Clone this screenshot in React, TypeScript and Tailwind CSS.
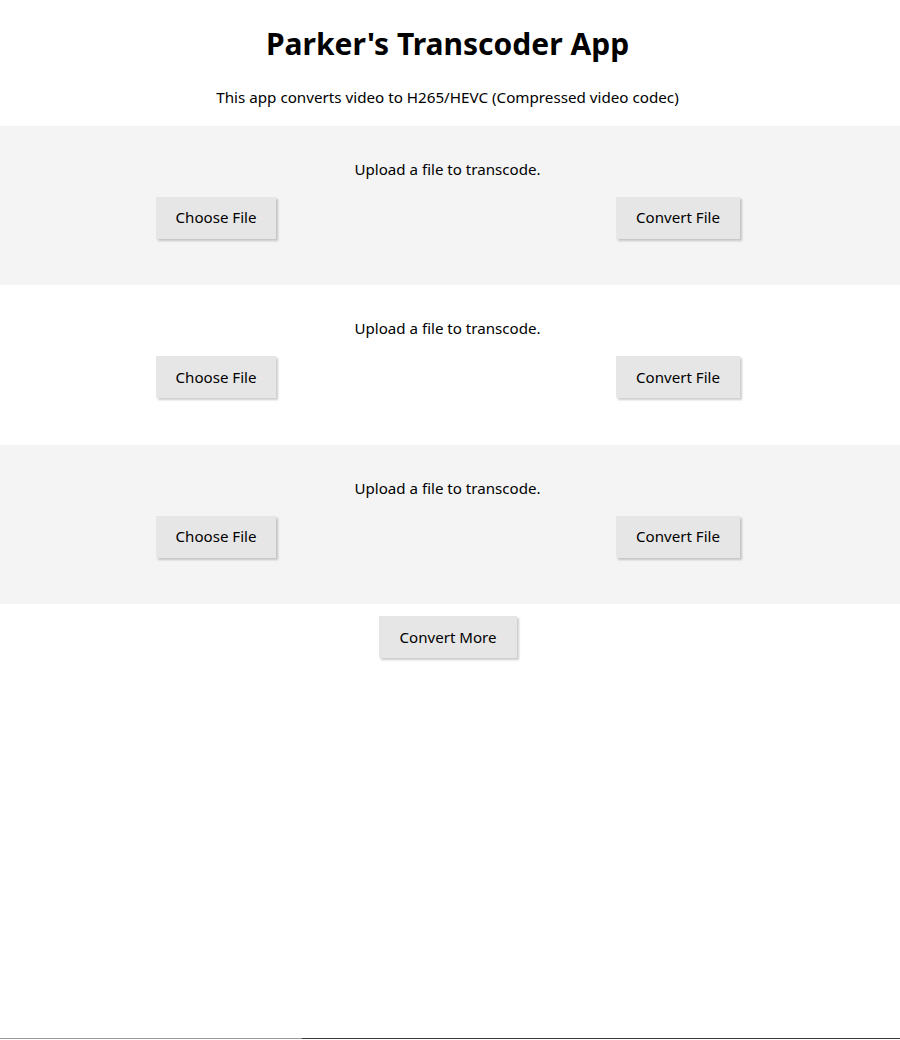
import React from "react";

function Btn({ label, w }: { label: string; w: string }) {
  return (
    <button
      className={`h-[42px] ${w} bg-[#e6e6e6] text-[15.1px] text-black shadow-[2px_2px_2px_rgba(0,0,0,0.2)]`}
    >
      {label}
    </button>
  );
}

function Section({ grey }: { grey: boolean }) {
  return (
    <div className={`h-[159.5px] ${grey ? "bg-[#f4f4f4]" : "bg-white"} pt-[32px]`}>
      <p className="pr-[5px] text-center text-[15.1px] leading-[22px] text-black">Upload a file to transcode.</p>
      <div className="mt-[17px] ml-[156px] flex w-[584px] justify-between">
        <Btn label="Choose File" w="w-[120px]" />
        <Btn label="Convert File" w="w-[124px]" />
      </div>
    </div>
  );
}

export default function App() {
  return (
    <div
      className="min-h-[1040px] bg-white text-black"
      style={{ fontFamily: '"Noto Sans", "Open Sans", sans-serif' }}
    >
      <h1 className="pr-[5px] pt-[22px] text-center text-[30px] font-bold leading-[44px]">Parker's Transcoder App</h1>
      <p className="mt-[20px] pr-[5px] text-center text-[15.2px] leading-[22px]">
        This app converts video to H265/HEVC (Compressed video codec)
      </p>
      <div className="mt-[17.5px]">
        <Section grey={true} />
        <Section grey={false} />
        <Section grey={true} />
      </div>
      <div className="mt-[12px] flex justify-center pr-[4px]">
        <Btn label="Convert More" w="w-[138px]" />
      </div>
      <div className="fixed bottom-[1px] left-0 flex h-px w-full">
        <div className="w-[302px] bg-[#9a9a9a]" />
        <div className="flex-1 bg-[#3a3a3a]" />
      </div>
    </div>
  );
}
